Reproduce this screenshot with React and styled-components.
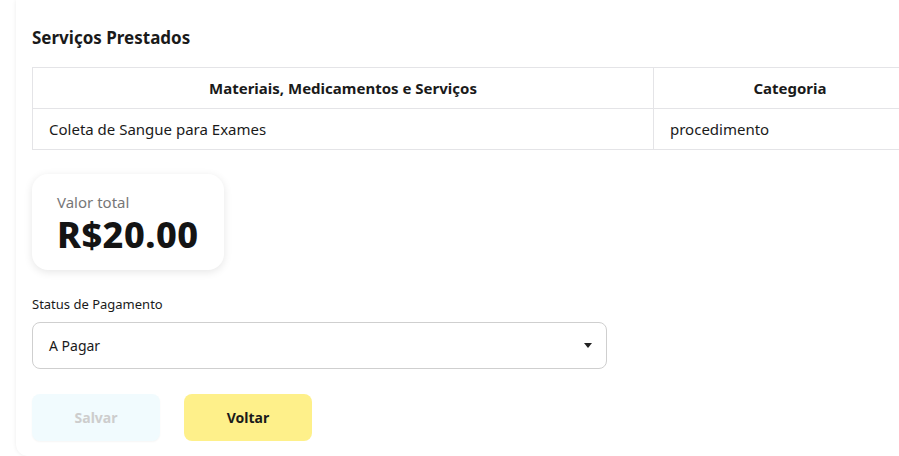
import React from 'react';
import styled, { createGlobalStyle } from 'styled-components';

const GlobalStyle = createGlobalStyle`
  html, body {
    margin: 0;
    padding: 0;
    background: #ffffff;
    overflow: hidden;
  }
  body {
    font-family: "Noto Sans", "Open Sans", Arial, sans-serif;
    color: #1a1a1a;
  }
`;

const Page = styled.div`
  padding-left: 16px;
  height: 456px;
  overflow: hidden;
`;

const Card = styled.div`
  width: 927px;
  box-sizing: border-box;
  height: 456px;
  background: #fff;
  border-radius: 0 0 12px 12px;
  box-shadow: 0 0 4px rgba(0, 0, 0, 0.08);
  padding: 26px 16px 0;
`;

const Title = styled.h2`
  margin: 0 0 17px;
  font-size: 17px;
  line-height: 24px;
  font-weight: 700;
  color: #1a1a1a;
`;

const Table = styled.table`
  width: 895px;
  table-layout: fixed;
  border-collapse: collapse;
  font-size: 15px;
`;

const Th = styled.th`
  box-sizing: border-box;
  height: 41px;
  padding: 0 16px;
  border: 1px solid #e4e4e7;
  font-weight: 700;
  text-align: center;
  width: ${(p) => p.$w || 'auto'};
`;

const Td = styled.td`
  box-sizing: border-box;
  height: 41px;
  padding: 0 16px;
  border: 1px solid #e4e4e7;
  text-align: left;
`;

const TotalCard = styled.div`
  margin-top: 24px;
  width: 192px;
  height: 96px;
  box-sizing: border-box;
  border-radius: 16px;
  padding: 18px 25px;
  background: #fff;
  box-shadow: 0 2px 8px rgba(0, 0, 0, 0.1);
`;

const TotalLabel = styled.div`
  font-size: 15px;
  line-height: 20px;
  color: #777;
`;

const TotalValue = styled.div`
  margin-top: 6px;
  font-size: 36px;
  line-height: 34px;
  font-weight: 800;
  letter-spacing: 0.5px;
  color: #141414;
  white-space: nowrap;
`;

const Label = styled.div`
  margin-top: 25px;
  font-size: 13px;
  line-height: 18px;
  color: #1a1a1a;
`;

const Select = styled.div`
  margin-top: 9px;
  width: 575px;
  height: 47px;
  box-sizing: border-box;
  border: 1px solid #cfcfcf;
  border-radius: 8px;
  display: flex;
  align-items: center;
  justify-content: space-between;
  padding: 0 14px 0 16px;
  font-size: 14px;
`;

const Caret = styled.span`
  width: 0;
  height: 0;
  border-left: 4px solid transparent;
  border-right: 4px solid transparent;
  border-top: 5px solid #222;
`;

const Buttons = styled.div`
  margin-top: 25px;
  display: flex;
  gap: 24px;
`;

const Button = styled.button`
  width: 128px;
  height: 47px;
  border: none;
  border-radius: 8px;
  font-family: inherit;
  font-size: 14px;
  font-weight: 700;
  background: ${(p) => (p.$variant === 'yellow' ? '#fef08a' : '#f1fbfe')};
  color: ${(p) => (p.$variant === 'yellow' ? '#1a1a1a' : '#cdcdcd')};
  box-shadow: ${(p) => (p.$variant === 'yellow' ? 'none' : '0 1px 2px rgba(0,0,0,0.04)')};
`;

export default function App() {
  return (
    <Page>
      <GlobalStyle />
      <Card>
        <Title>Serviços Prestados</Title>
        <Table>
          <thead>
            <tr>
              <Th $w="621px">Materiais, Medicamentos e Serviços</Th>
              <Th>Categoria</Th>
            </tr>
          </thead>
          <tbody>
            <tr>
              <Td>Coleta de Sangue para Exames</Td>
              <Td>procedimento</Td>
            </tr>
          </tbody>
        </Table>
        <TotalCard>
          <TotalLabel>Valor total</TotalLabel>
          <TotalValue>R$20.00</TotalValue>
        </TotalCard>
        <Label>Status de Pagamento</Label>
        <Select>
          <span>A Pagar</span>
          <Caret />
        </Select>
        <Buttons>
          <Button disabled>Salvar</Button>
          <Button $variant="yellow">Voltar</Button>
        </Buttons>
      </Card>
    </Page>
  );
}
